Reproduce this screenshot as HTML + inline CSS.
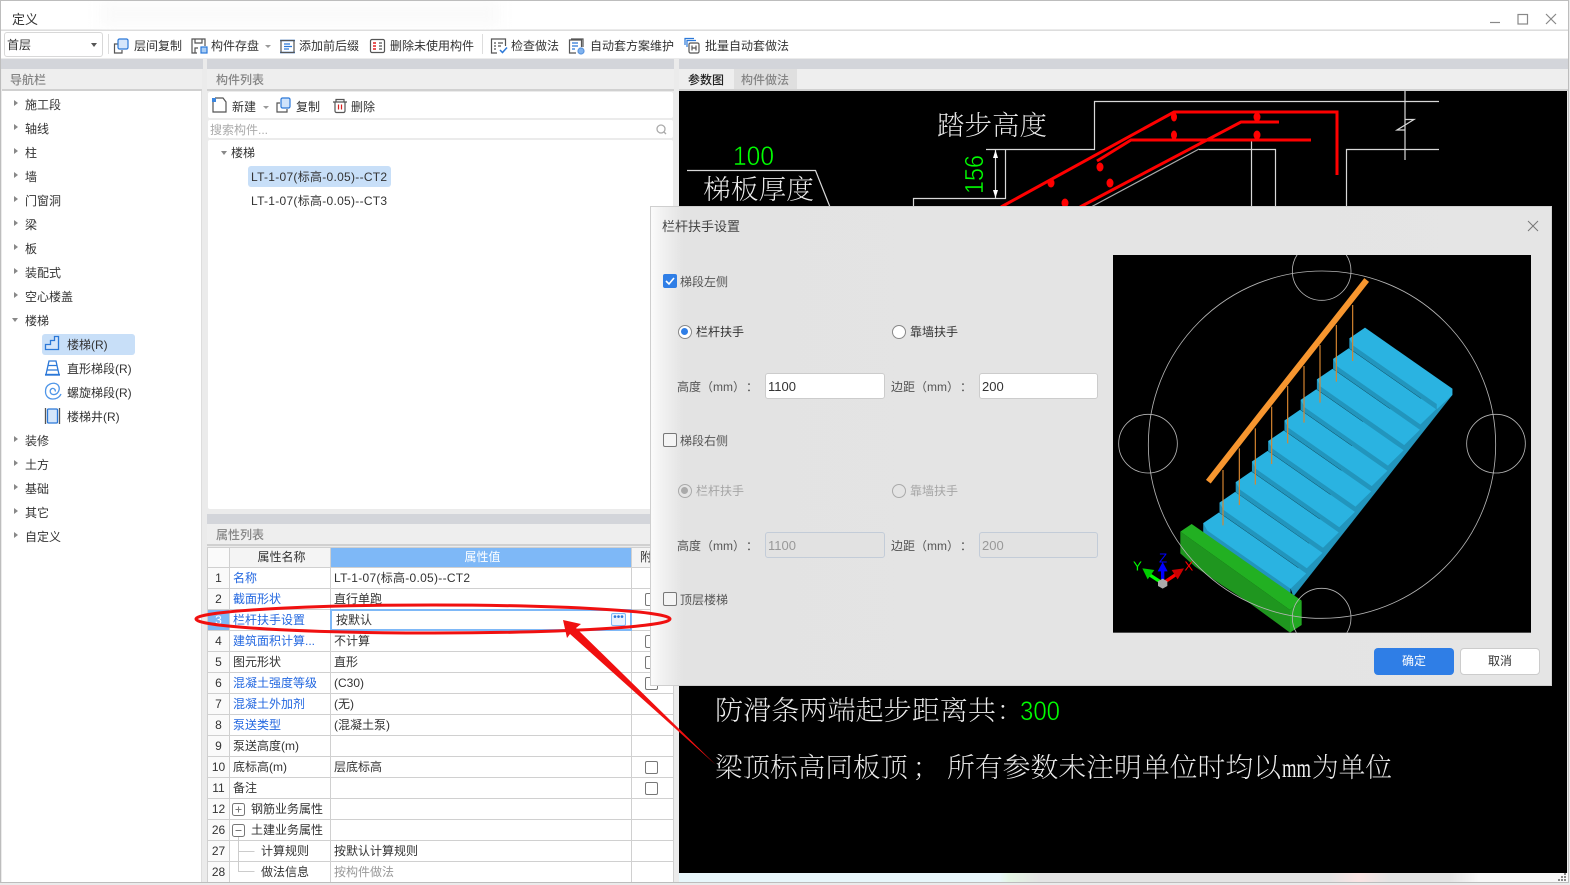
<!DOCTYPE html>
<html lang="zh">
<head>
<meta charset="utf-8">
<title>定义</title>
<style>
html,body{margin:0;padding:0}
body{width:1570px;height:885px;overflow:hidden;position:relative;background:#ebebeb;font-family:"Liberation Sans","Noto Sans CJK SC",sans-serif;font-size:12px;color:#333;text-spacing-trim:space-all}
.a{position:absolute}
.t{position:absolute;line-height:16px;white-space:nowrap}
.hdr{color:#858585;font-weight:500}
.tri{position:absolute;width:0;height:0;border-left:4px solid #888;border-top:3.5px solid transparent;border-bottom:3.5px solid transparent}
.trd{position:absolute;width:0;height:0;border-top:4px solid #888;border-left:3.5px solid transparent;border-right:3.5px solid transparent}
svg{position:absolute;overflow:visible}
table{position:absolute;left:207px;top:547px;width:466px;border-collapse:collapse;table-layout:fixed;background:#fff;font-size:12px}
td,th{border:1px solid #d0d0d0;padding:0 0 0 3px;font-weight:normal;white-space:nowrap;overflow:hidden;line-height:19px;box-sizing:border-box}
td{padding-top:1px}
tr{height:21px}
tr.h{height:20px}
td.n,th.n{text-align:center;padding:1px 0 0;background:#fafafa;color:#333}
th.n{padding:0}
td.b{color:#2468e0}
th{background:#f4f4f4;text-align:center}
th.v{background:#7eb8f7;color:#fff}
.cb{position:absolute;width:11px;height:11px;border:1px solid #777;border-radius:2px;background:#fff}
.dcb{position:absolute;width:12px;height:12px;border:1px solid #777;border-radius:2px;background:#f4f4f4}
.inp{position:absolute;height:26px;box-sizing:border-box;border:1px solid #ccc;border-radius:3px;background:#fff;font-size:13px;line-height:25px;padding-left:2px;color:#333}
.dis{background:#e2e2e2;border-color:#c3ccd8;color:#999}
.r{position:absolute;width:12px;height:12px;border:1px solid #888;border-radius:50%;background:#fff}
.dt{color:#555}
.ls{letter-spacing:.28px}
</style>
</head>
<body>
<!-- title bar -->
<div class="a" style="left:1px;top:1px;width:1567px;height:28px;background:#fff"></div>
<div class="a" style="left:100px;top:2px;width:400px;height:24px;background:#fafafa;filter:blur(7px)"></div>
<div class="t" style="left:12px;top:12px;font-size:13px">定义</div>
<svg style="left:0;top:0" width="1570" height="60" fill="none" stroke="#888" stroke-width="1.2">
<path d="M1490 22.5h10"/><rect x="1518" y="14.5" width="9.5" height="9.5"/><path d="M1546 14l10 10M1556 14l-10 10"/>
</svg>
<!-- toolbar -->
<div class="a" style="left:1px;top:30px;width:1567px;height:28px;background:#fff;border-top:1px solid #ddd;box-sizing:border-box"></div>
<div class="a" style="left:4px;top:32px;width:99px;height:25px;border:1px solid #d8d8d8;border-radius:3px;box-sizing:border-box;background:#fff"></div>
<div class="t" style="left:7px;top:37px">首层</div>
<div class="trd" style="left:91px;top:43px;border-top-color:#555"></div>
<div class="a" style="left:108px;top:34px;width:1px;height:20px;background:#ddd"></div>
<div class="a" style="left:482px;top:34px;width:1px;height:20px;background:#ddd"></div>
<svg style="left:0;top:31px" width="800" height="30" fill="none" stroke-width="1.2">
<!-- 层间复制 -->
<path d="M118 13h-3.500v9h7.500v-3" stroke="#555"/><rect x="118" y="8" width="10" height="10" rx="1.500" fill="#d5e6fb" stroke="#2b78d8"/>
<!-- 构件存盘 -->
<path d="M197 22h-5v-14h13v7M195 8v4h7v-4M195 22v-5h3" stroke="#555"/><rect x="201" y="16" width="6" height="6" fill="#a9cdf5" stroke="#2b78d8"/>
<!-- 添加前后缀 -->
<path d="M280 9.500h15M280 21.500h15" stroke="#2b78d8" stroke-width="1.400"/><rect x="281" y="9.500" width="13" height="12" stroke="#555"/><path d="M284 13h6M284 15.500h8M284 18h5" stroke="#2b78d8"/>
<!-- 删除未使用 -->
<rect x="370.500" y="8.500" width="14" height="13" rx="1.500" stroke="#555"/><path d="M373 12h3M373 15h3M373 18h3" stroke="#e02020" stroke-width="1.600"/><path d="M379 12h3M379 15h3M379 18h3" stroke="#555"/>
<!-- 检查做法 -->
<path d="M497 22h-5.500v-14h14v7" stroke="#555"/><path d="M494 12h2M498 12h5M494 15h2M498 15h3M494 18h2" stroke="#555"/><path d="M500 19l2.500 2.500 4.500-5" stroke="#2b78d8" stroke-width="1.500"/>
<!-- 自动套方案维护 -->
<path d="M576 22h-6.500v-13h12v7" stroke="#555"/><path d="M571 8h12v8" stroke="#555"/><path d="M572 12h6M572 15h6M572 18h3" stroke="#2b78d8"/><circle cx="581" cy="20" r="3" fill="#7fb2ee" stroke="#5b96df"/>
<!-- 批量自动套做法 -->
<path d="M685 14v-6.500h9M687 16v-6.500h9" stroke="#2b78d8"/><rect x="689" y="12" width="10" height="10" rx="1.500" stroke="#555"/><path d="M692 14.500v5M696 14.500v5M692 17h4" stroke="#555"/>
</svg>
<div class="t" style="left:134px;top:38px">层间复制</div>
<div class="t" style="left:211px;top:38px">构件存盘</div>
<div class="trd" style="left:265px;top:45px;border-top-color:#999;border-top-width:3px;border-left-width:3px;border-right-width:3px"></div>
<div class="t" style="left:299px;top:38px">添加前后缀</div>
<div class="t" style="left:390px;top:38px">删除未使用构件</div>
<div class="t" style="left:511px;top:38px">检查做法</div>
<div class="t" style="left:590px;top:38px">自动套方案维护</div>
<div class="t" style="left:705px;top:38px">批量自动套做法</div>

<!-- band -->
<div class="a" style="left:1px;top:59px;width:1568px;height:10px;background:#d3d5da"></div>
<div class="a" style="left:203px;top:59px;width:4px;height:10px;background:#ebebeb"></div>
<div class="a" style="left:674px;top:59px;width:5px;height:10px;background:#ebebeb"></div>

<!-- nav -->
<div class="a" style="left:2px;top:69px;width:200px;height:22px;background:#eee;border-bottom:2px solid #d0d0d0;box-sizing:border-box"></div>
<div class="t hdr" style="left:10px;top:72px">导航栏</div>
<div class="a" style="left:2px;top:91px;width:200px;height:791px;background:#fff;border-right:1px solid #ddd;box-sizing:border-box"></div>
<div class="tri" style="left:14px;top:100px"></div><div class="t" style="left:25px;top:97px">施工段</div>
<div class="tri" style="left:14px;top:124px"></div><div class="t" style="left:25px;top:121px">轴线</div>
<div class="tri" style="left:14px;top:148px"></div><div class="t" style="left:25px;top:145px">柱</div>
<div class="tri" style="left:14px;top:172px"></div><div class="t" style="left:25px;top:169px">墙</div>
<div class="tri" style="left:14px;top:196px"></div><div class="t" style="left:25px;top:193px">门窗洞</div>
<div class="tri" style="left:14px;top:220px"></div><div class="t" style="left:25px;top:217px">梁</div>
<div class="tri" style="left:14px;top:244px"></div><div class="t" style="left:25px;top:241px">板</div>
<div class="tri" style="left:14px;top:268px"></div><div class="t" style="left:25px;top:265px">装配式</div>
<div class="tri" style="left:14px;top:292px"></div><div class="t" style="left:25px;top:289px">空心楼盖</div>
<div class="trd" style="left:12px;top:318px"></div><div class="t" style="left:25px;top:313px">楼梯</div>
<div class="a" style="left:42px;top:334px;width:93px;height:21px;background:#c8dff8;border-radius:3px"></div>
<svg style="left:0;top:330px" width="70" height="100" fill="none" stroke-width="1.300" stroke="#2b78d8">
<path d="M45.500 19.500h13v-13h-4v4h-4v4h-5z" fill="#d5e6fb"/>
<path d="M49 31h7l3 13.500h-13zM48 35.500h9M47 40h11" fill="#fff"/><path d="M45 44.800h15" stroke-width="1.800"/>
<path d="M61 64C58 71 46 71 45.500 62C45 54 54 51 58 55C61 59 58 65 53 64.500C50 64 49 60 52 58.500C54 58 56 60 55 61.500" stroke="#4f96e8"/>
<rect x="47.500" y="79" width="10" height="14" rx="1" fill="#d5e6fb"/><path d="M45.500 78v16M59.500 78v16" stroke="#555"/>
</svg>
<div class="t" style="left:67px;top:337px">楼梯(R)</div>
<div class="t" style="left:67px;top:361px">直形梯段(R)</div>
<div class="t" style="left:67px;top:385px">螺旋梯段(R)</div>
<div class="t" style="left:67px;top:409px">楼梯井(R)</div>
<div class="tri" style="left:14px;top:436px"></div><div class="t" style="left:25px;top:433px">装修</div>
<div class="tri" style="left:14px;top:460px"></div><div class="t" style="left:25px;top:457px">土方</div>
<div class="tri" style="left:14px;top:484px"></div><div class="t" style="left:25px;top:481px">基础</div>
<div class="tri" style="left:14px;top:508px"></div><div class="t" style="left:25px;top:505px">其它</div>
<div class="tri" style="left:14px;top:532px"></div><div class="t" style="left:25px;top:529px">自定义</div>

<!-- component list -->
<div class="a" style="left:207px;top:69px;width:467px;height:22px;background:#eee;border-bottom:2px solid #d0d0d0;box-sizing:border-box"></div>
<div class="t hdr" style="left:216px;top:72px">构件列表</div>
<div class="a" style="left:208px;top:92px;width:465px;height:26px;background:#fff;border-radius:2px"></div>
<svg style="left:205px;top:90px" width="200" height="30" fill="none" stroke-width="1.200" stroke="#555">
<path d="M8 10v12h13v-10l-3-4h-8"/><rect x="7" y="8" width="4" height="4" fill="#3c86de" stroke="none"/>
<path d="M75 13h-3v9h10v-3"/><rect x="76" y="8" width="9" height="10" rx="1.500" fill="#cfe3fb" stroke="#2b78d8"/>
<path d="M128 12h14M131 12v-2.500h8v2.500M130 12v9a1.500 1.500 0 0 0 1.500 1.500h7a1.500 1.500 0 0 0 1.500-1.500v-9"/><path d="M133.500 14.500v5M136.500 14.500v5" stroke="#d92020"/>
</svg>
<div class="t" style="left:232px;top:99px">新建</div>
<div class="trd" style="left:263px;top:106px;border-top-color:#999;border-top-width:3px;border-left-width:3px;border-right-width:3px"></div>
<div class="t" style="left:296px;top:99px">复制</div>
<div class="t" style="left:351px;top:99px">删除</div>
<div class="a" style="left:208px;top:120px;width:465px;height:18px;background:#fff;border-radius:2px"></div>
<div class="t" style="left:210px;top:122px;color:#aaa">搜索构件...</div>
<svg style="left:655px;top:123px" width="14" height="14" fill="none" stroke="#aaa" stroke-width="1.300"><circle cx="6" cy="6" r="4"/><path d="M8.500 8.500l2.500 2.500"/></svg>
<div class="a" style="left:208px;top:140px;width:465px;height:369px;background:#fff;border-radius:2px"></div>
<div class="trd" style="left:221px;top:151px"></div>
<div class="t" style="left:231px;top:145px">楼梯</div>
<div class="a" style="left:248px;top:166px;width:143px;height:21px;background:#c8dff8;border-radius:3px"></div>
<div class="t ls" style="left:251px;top:169px">LT-1-07(标高-0.05)--CT2</div>
<div class="t ls" style="left:251px;top:193px">LT-1-07(标高-0.05)--CT3</div>

<!-- property list -->
<div class="a" style="left:207px;top:514px;width:467px;height:10px;background:#d3d5da"></div>
<div class="a" style="left:207px;top:524px;width:467px;height:22px;background:#eee;border-bottom:2px solid #d0d0d0;box-sizing:border-box"></div>
<div class="t hdr" style="left:216px;top:527px">属性列表</div>
<table>
<colgroup><col style="width:22px"><col style="width:101px"><col style="width:301px"><col style="width:42px"></colgroup>
<tr class="h"><th class="n"></th><th>属性名称</th><th class="v">属性值</th><th style="text-align:left;padding-left:8px">附</th></tr>
<tr><td class="n">1</td><td class="b">名称</td><td class="ls">LT-1-07(标高-0.05)--CT2</td><td></td></tr>
<tr><td class="n">2</td><td class="b">截面形状</td><td>直行单跑</td><td></td></tr>
<tr><td class="n" style="background:#7eb8f7;color:#fff">3</td><td class="b">栏杆扶手设置</td><td style="padding-left:5px">按默认</td><td></td></tr>
<tr><td class="n">4</td><td class="b">建筑面积计算...</td><td>不计算</td><td></td></tr>
<tr><td class="n">5</td><td>图元形状</td><td>直形</td><td></td></tr>
<tr><td class="n">6</td><td class="b">混凝土强度等级</td><td>(C30)</td><td></td></tr>
<tr><td class="n">7</td><td class="b">混凝土外加剂</td><td>(无)</td><td></td></tr>
<tr><td class="n">8</td><td class="b">泵送类型</td><td>(混凝土泵)</td><td></td></tr>
<tr><td class="n">9</td><td>泵送高度(m)</td><td></td><td></td></tr>
<tr><td class="n">10</td><td>底标高(m)</td><td>层底标高</td><td></td></tr>
<tr><td class="n">11</td><td>备注</td><td></td><td></td></tr>
<tr><td class="n">12</td><td style="padding-left:21px">钢筋业务属性</td><td></td><td></td></tr>
<tr><td class="n">26</td><td style="padding-left:21px">土建业务属性</td><td></td><td></td></tr>
<tr><td class="n">27</td><td style="padding-left:31px">计算规则</td><td>按默认计算规则</td><td></td></tr>
<tr><td class="n">28</td><td style="padding-left:31px">做法信息</td><td style="color:#999">按构件做法</td><td></td></tr>
</table>
<div class="a" style="left:330px;top:609px;width:302px;height:22px;border:2px solid #7eb8f7;box-sizing:border-box"></div>
<div class="cb" style="left:645px;top:593px"></div>
<div class="cb" style="left:645px;top:635px"></div>
<div class="cb" style="left:645px;top:656px"></div>
<div class="cb" style="left:645px;top:677px"></div>
<div class="cb" style="left:645px;top:761px"></div>
<div class="cb" style="left:645px;top:782px"></div>
<svg style="left:200px;top:510px" width="480" height="375" fill="none" stroke="#777" stroke-width="1">
<rect x="32.500" y="293.500" width="12" height="12" rx="2"/><path d="M35.500 299.500h6M38.500 296.500v6"/>
<rect x="32.500" y="314.500" width="12" height="12" rx="2"/><path d="M35.500 320.500h6"/>
<path d="M38.500 327v34.500h16M38.500 341.500h16" stroke="#ccc"/>
</svg>
<div class="a" style="left:611px;top:613px;width:13px;height:11px;border:1px solid #7eb8f7;border-radius:2px;background:#eaf3fe;color:#2b78d8;font-size:10px;line-height:7px;text-align:center;letter-spacing:0">•••</div>

<!-- right panel -->
<div class="a" style="left:679px;top:69px;width:889px;height:22px;background:#eee;border-bottom:2px solid #d0d0d0;box-sizing:border-box"></div>
<div class="a" style="left:734px;top:69px;width:63px;height:20px;background:#dfdfdf"></div>
<div class="t" style="left:688px;top:72px;font-weight:500;color:#222">参数图</div>
<div class="t hdr" style="left:741px;top:72px">构件做法</div>
<div class="a" style="left:679px;top:91px;width:888px;height:782px;background:#000"></div>

<svg style="left:0;top:0" width="1570" height="885" fill="none">
<g stroke="#d8d8d8" stroke-width="1.200">
<path d="M1439 101.500H1094.500V149.500H986M1005.500 149.500V198.500H913.500V207"/>
<path d="M995.500 150V198M1199 149.500h76.500V207M1251.500 140V207M1346.500 207V149.500H1439M687 170.500H815.500L830 207"/>
<path d="M1405 91V160M1405 119.500h9l-17 10.500h8" />
<path d="M1199 149L1091 207" stroke="#aaa"/>
</g>
<path d="M995.500 150l-2.500 8h5zM995.500 198l-2.500-8h5z" fill="#fff"/>
<g stroke="#f00" stroke-width="3">
<path d="M1001 207L1174 112H1337V175"/>
<path d="M1080 207L1241 122H1279"/>
<path d="M1097 161L1131 140H1311"/>
</g>
<g fill="#f00"><ellipse cx="1174" cy="117" rx="3" ry="4.500"/><ellipse cx="1257" cy="117" rx="3.500" ry="4.500"/><ellipse cx="1174" cy="135" rx="3" ry="4.500"/><ellipse cx="1257" cy="135" rx="3.500" ry="4.500"/><ellipse cx="1100" cy="167" rx="3.500" ry="4.500"/><ellipse cx="1051" cy="183" rx="3.500" ry="4.500"/><ellipse cx="1110" cy="183" rx="3.500" ry="4.500"/><ellipse cx="1065" cy="203" rx="3.500" ry="4.500"/></g>
<g font-family="'Noto Serif CJK SC','Liberation Serif',serif" fill="#eee" font-size="27" font-weight="200" stroke="none">
<text x="937" y="135" textLength="110" lengthAdjust="spacingAndGlyphs">踏步高度</text>
<text x="703" y="199" textLength="111" lengthAdjust="spacingAndGlyphs">梯板厚度</text>
<text x="715" y="720" textLength="281" lengthAdjust="spacingAndGlyphs">防滑条两端起步距离共</text>
<text x="997" y="720">：</text>
<text x="715" y="777" textLength="193" lengthAdjust="spacingAndGlyphs">梁顶标高同板顶</text>
<text x="913" y="777">；</text>
<text x="947" y="777" textLength="334" lengthAdjust="spacingAndGlyphs">所有参数未注明单位时均以</text>
<text x="1282" y="777" textLength="29" lengthAdjust="spacingAndGlyphs" font-family="'Liberation Serif',serif">mm</text>
<text x="1312" y="777" textLength="80" lengthAdjust="spacingAndGlyphs">为单位</text>
</g>
<g font-family="'Liberation Sans',sans-serif" fill="#0f0" font-size="27" stroke="#000" stroke-width=".5">
<text x="733" y="165" textLength="41" lengthAdjust="spacingAndGlyphs">100</text>
<text x="1020" y="720" textLength="40" lengthAdjust="spacingAndGlyphs">300</text>
<text transform="translate(983,194) rotate(-90)" x="0" y="0" textLength="39" lengthAdjust="spacingAndGlyphs" font-size="26">156</text>
</g>
</svg>

<!-- bottom strip -->
<div class="a" style="left:679px;top:873px;width:889px;height:10px;background:linear-gradient(90deg,#e8f7fb 0,#e8f7fb 320px,#e4f5e4 330px,#e4e4e4 360px,#e4e4e4 650px,#fbe4e4 680px,#e4e4e4 710px,#e4e4e4 770px,#f8f8f8 800px)"></div>
<svg style="left:1558px;top:873px" width="10" height="10" fill="#888"><rect x="6" y="0" width="2" height="2"/><rect x="3" y="3" width="2" height="2"/><rect x="6" y="3" width="2" height="2"/><rect x="0" y="6" width="2" height="2"/><rect x="3" y="6" width="2" height="2"/><rect x="6" y="6" width="2" height="2"/></svg>

<!-- dialog -->
<div class="a" style="left:650px;top:206px;width:902px;height:480px;background:linear-gradient(90deg,#fbfbfb 0,#f2f2f2 10px,#e3e3e3 32px,#e5e5e5 100%);border:1px solid #cfcfcf;box-sizing:border-box"></div>
<div class="t" style="left:662px;top:219px;font-size:13px;color:#444">栏杆扶手设置</div>
<svg style="left:1527px;top:220px" width="12" height="12" fill="none" stroke="#777" stroke-width="1"><path d="M1 1l10 10M11 1L1 11"/></svg>

<div class="a" style="left:663px;top:274px;width:14px;height:14px;background:#2f7ee6;border-radius:2px"></div>
<svg style="left:663px;top:274px" width="14" height="14" fill="none" stroke="#fff" stroke-width="1.600"><path d="M3 7l3 3 5-6"/></svg>
<div class="t dt" style="left:680px;top:274px">梯段左侧</div>
<div class="r" style="left:678px;top:325px"></div>
<div class="a" style="left:681px;top:328px;width:7px;height:7px;border-radius:50%;background:#2f7ee6"></div>
<div class="t" style="left:696px;top:324px">栏杆扶手</div>
<div class="r" style="left:892px;top:325px"></div>
<div class="t" style="left:910px;top:324px">靠墙扶手</div>
<div class="t dt" style="left:677px;top:379px">高度（mm）</div><div class="t dt" style="left:746px;top:379px">：</div>
<div class="inp" style="left:765px;top:373px;width:120px">1100</div>
<div class="t dt" style="left:891px;top:379px">边距（mm）</div><div class="t dt" style="left:960px;top:379px">：</div>
<div class="inp" style="left:979px;top:373px;width:119px">200</div>

<div class="dcb" style="left:663px;top:433px"></div>
<div class="t dt" style="left:680px;top:433px">梯段右侧</div>
<div class="r" style="left:678px;top:484px;background:#e4e4e4;border-color:#aaa"></div>
<div class="a" style="left:681px;top:487px;width:7px;height:7px;border-radius:50%;background:#aaa"></div>
<div class="t" style="left:696px;top:483px;color:#a5a5a5">栏杆扶手</div>
<div class="r" style="left:892px;top:484px;background:#e4e4e4;border-color:#aaa"></div>
<div class="t" style="left:910px;top:483px;color:#a5a5a5">靠墙扶手</div>
<div class="t dt" style="left:677px;top:538px">高度（mm）</div><div class="t dt" style="left:746px;top:538px">：</div>
<div class="inp dis" style="left:765px;top:532px;width:120px">1100</div>
<div class="t dt" style="left:891px;top:538px">边距（mm）</div><div class="t dt" style="left:960px;top:538px">：</div>
<div class="inp dis" style="left:979px;top:532px;width:119px">200</div>
<div class="dcb" style="left:663px;top:592px"></div>
<div class="t dt" style="left:680px;top:592px">顶层楼梯</div>

<div class="a" style="left:1374px;top:648px;width:80px;height:27px;background:#2f7ee6;border-radius:4px;color:#fff;text-align:center;line-height:27px">确定</div>
<div class="a" style="left:1460px;top:648px;width:80px;height:27px;background:#fff;border:1px solid #ccc;border-radius:4px;box-sizing:border-box;text-align:center;line-height:25px">取消</div>

<!-- stair illustration -->
<svg style="left:1105px;top:250px;overflow:hidden" width="430" height="390" viewBox="0 0 1290 1170">
<defs>
<clipPath id="cp"><rect x="24" y="15" width="1254" height="1133"/></clipPath>
<g id="s">
<polygon points="733,265 995,448 995,478 733,295" fill="#2295bd"/>
<polygon points="780,233 1042,416 995,462 745,287 733,265" fill="#2ab3e1"/>
</g>
</defs>
<rect x="24" y="15" width="1254" height="1133" fill="#000"/>
<g clip-path="url(#cp)">
<polygon points="1042,416 1042,435 565,1040 555,1010 780,500" fill="#2295bd"/>
<polygon points="1042,416 1042,435 995,478 995,448" fill="#2ab3e1"/>
<use href="#s"/>
<use href="#s" transform="translate(-48.700,61.600)"/>
<use href="#s" transform="translate(-97.400,123.200)"/>
<use href="#s" transform="translate(-146.100,184.800)"/>
<use href="#s" transform="translate(-194.800,246.400)"/>
<use href="#s" transform="translate(-243.500,308)"/>
<use href="#s" transform="translate(-292.200,369.600)"/>
<use href="#s" transform="translate(-340.900,431.200)"/>
<use href="#s" transform="translate(-389.600,492.800)"/>
<use href="#s" transform="translate(-438.300,554.400)"/>
<polygon points="226,845 226,910 270,950 350,1005 435,1060 555,1148 555,1080" fill="#1f961f"/>
<polygon points="226,845 260,822 590,1052 555,1080" fill="#22b022"/>
<polygon points="555,1080 590,1052 590,1125 555,1148" fill="#22a822"/>
<g stroke="#d9862f" stroke-width="3.500">
<path d="M354 660V826M403 595V765M451 535V704M500 470V642M548 408V580M597 348V518M645 285V458M694 225V395M743 165V333"/>
</g>
<path d="M310 695L470 490L785 90" fill="none" stroke="#f7962f" stroke-width="18"/>
<g fill="none" stroke="#b5b5b5" stroke-width="2.500">
<circle cx="651" cy="584" r="521"/><circle cx="129" cy="581" r="88"/><circle cx="1173" cy="581" r="88"/><circle cx="650" cy="63" r="88"/><circle cx="650" cy="1103" r="88"/>
</g>
</g>
<path d="M173 1000L130 972" stroke="#0f0" stroke-width="10"/><polygon points="112,955 148,960 128,988" fill="#0c0"/>
<path d="M173 1000L215 972" stroke="#f00" stroke-width="10"/><polygon points="237,955 200,960 218,988" fill="#c00"/>
<path d="M173 1000V955" stroke="#00f" stroke-width="10"/><polygon points="173,936 158,964 188,964" fill="#00f"/>
<polygon points="159,994 173,986 187,994 187,1008 173,1016 159,1008" fill="#aaa"/>
<text x="162" y="938" font-size="40" fill="#00f" font-family="Liberation Sans,sans-serif">Z</text>
<text x="238" y="962" font-size="40" fill="#f00" font-family="Liberation Sans,sans-serif">X</text>
<text x="84" y="962" font-size="40" fill="#0f0" font-family="Liberation Sans,sans-serif">Y</text>
</svg>

<!-- annotation -->
<svg style="left:0;top:0" width="1570" height="885" fill="none">
<ellipse cx="433" cy="619" rx="237" ry="14" stroke="#f01010" stroke-width="3"/>
<polygon points="563,620 581,624 576,628 716,765 570,634 567,638" fill="#f01010"/>
</svg>

<!-- window edge -->
<div class="a" style="left:0;top:0;width:1569px;height:883px;border:1px solid #bdbdbd;box-sizing:border-box;pointer-events:none"></div>
</body>
</html>
